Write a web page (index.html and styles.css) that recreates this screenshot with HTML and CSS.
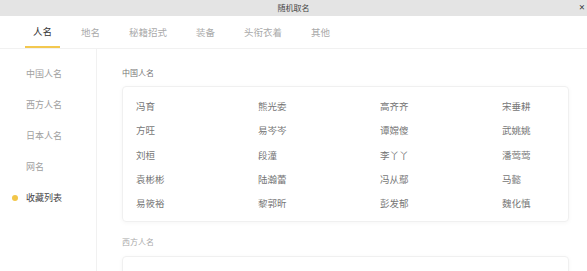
FILE: index.html
```html
<!DOCTYPE html>
<html lang="zh-CN">
<head>
  <meta charset="UTF-8">
  <title>随机取名</title>
  <link rel="stylesheet" href="styles.css">
</head>
<body>
  <div class="window">
    <div class="titlebar">
      <span class="title">随机取名</span>
      <span class="close">✕</span>
    </div>
    <div class="tabs">
      <div class="tab active">人名</div>
      <div class="tab">地名</div>
      <div class="tab">秘籍招式</div>
      <div class="tab">装备</div>
      <div class="tab">头衔衣着</div>
      <div class="tab">其他</div>
    </div>
    <div class="body">
      <div class="sidebar">
        <div class="side-item">中国人名</div>
        <div class="side-item">西方人名</div>
        <div class="side-item">日本人名</div>
        <div class="side-item">网名</div>
        <div class="side-item active">收藏列表</div>
      </div>
      <div class="main">
        <div class="section-title">中国人名</div>
        <div class="card">
          <div class="name">冯育</div>
          <div class="name">熊光委</div>
          <div class="name">高齐齐</div>
          <div class="name">宋垂耕</div>
          <div class="name">方旺</div>
          <div class="name">易岑岑</div>
          <div class="name">谭嫦傻</div>
          <div class="name">武姚姚</div>
          <div class="name">刘桓</div>
          <div class="name">段潼</div>
          <div class="name">李丫丫</div>
          <div class="name">潘莺莺</div>
          <div class="name">袁彬彬</div>
          <div class="name">陆瀚蕾</div>
          <div class="name">冯从鄢</div>
          <div class="name">马懿</div>
          <div class="name">易筱裕</div>
          <div class="name">黎郭昕</div>
          <div class="name">彭发郁</div>
          <div class="name">魏化慎</div>
        </div>
        <div class="section-title">西方人名</div>
        <div class="card card-empty"></div>
      </div>
    </div>
  </div>
</body>
</html>
```

FILE: styles.css
```css
html, body {
  margin: 0;
  height: 100%;
  overflow: hidden;
}

body {
  font-family: "Noto Sans CJK SC", "Liberation Sans", sans-serif;
  background: #fff;
  color: #666;
}

.window {
  height: 100%;
  display: flex;
  flex-direction: column;
}

.titlebar {
  height: 16px;
  flex-shrink: 0;
  background: #e4e4e4;
  display: flex;
  align-items: center;
  justify-content: center;
  position: relative;
}

.title {
  font-size: 8px;
  color: #444;
  line-height: 16px;
}

.close {
  position: absolute;
  right: 2px;
  top: 0;
  font-size: 7.5px;
  font-weight: bold;
  line-height: 16px;
  color: #333;
  font-family: "DejaVu Sans", sans-serif;
}

.tabs {
  display: flex;
  flex-shrink: 0;
  gap: 13px;
  padding-left: 25px;
  height: 32px;
  border-bottom: 1px solid #f1f1f1;
}

.tab {
  padding: 0 8px;
  font-size: 9.5px;
  line-height: 32px;
  color: #aaa;
  border-bottom: 2px solid transparent;
  margin-bottom: -1px;
}

.tab.active {
  color: #333;
  border-bottom-color: #f3c84f;
  line-height: 30px;
  height: 30px;
}

.body {
  flex: 1;
  min-height: 0;
  display: flex;
  overflow: hidden;
}

.sidebar {
  flex: 0 0 96px;
  border-right: 1px solid #f1f1f1;
  padding-top: 9px;
}

.side-item {
  font-size: 9px;
  line-height: 31px;
  padding-left: 26px;
  color: #a0a0a0;
  position: relative;
  white-space: nowrap;
}

.side-item.active {
  color: #444;
}

.side-item.active::before {
  content: '';
  position: absolute;
  left: 12px;
  top: 13px;
  width: 6px;
  height: 6px;
  border-radius: 50%;
  background: #f2c649;
}

.main {
  flex: 1;
  min-width: 0;
  padding: 18px 18px 0 25px;
}

.section-title {
  font-size: 8px;
  line-height: 12px;
  color: #777;
  margin-bottom: 7px;
}

.card + .section-title {
  margin-top: 14px;
  margin-bottom: 8px;
  color: #aaa;
}

.card {
  border: 1px solid #f0f0f0;
  border-radius: 4px;
  box-shadow: 0 1px 4px rgba(0, 0, 0, 0.04);
  padding: 7px 13px 6px;
  display: grid;
  grid-template-columns: 122px 122px 122px 1fr;
  grid-auto-rows: 24.25px;
}

.card-empty {
  height: 40px;
}

.name {
  font-size: 9.5px;
  line-height: 24.25px;
  color: #777;
  white-space: nowrap;
}
```
